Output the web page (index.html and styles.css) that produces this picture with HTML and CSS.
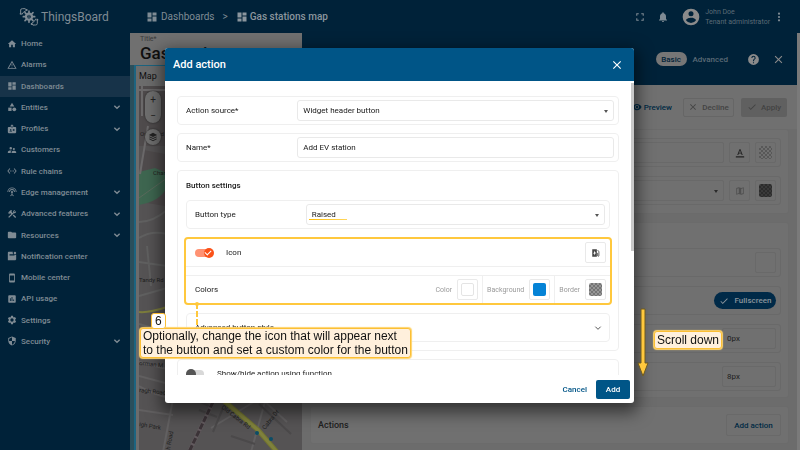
FILE: index.html
```html
<!DOCTYPE html>
<html lang="en">
<head>
    <meta charset="UTF-8">
    <meta name="viewport" content="width=device-width, initial-scale=1.0">
    <title>ThingsBoard</title>
    <link rel="stylesheet" href="styles.css">
</head>
<body>
    <svg class="sprite" aria-hidden="true">
        <symbol id="i-home" viewBox="0 0 24 24"><path d="M10 20v-6h4v6h5v-8h3L12 3 2 12h3v8z"/></symbol>
        <symbol id="i-alarm" viewBox="0 0 24 24"><path d="M12 5.99 19.53 19H4.47L12 5.99M12 2 1 21h22L12 2zm1 14h-2v2h2v-2zm0-6h-2v4h2v-4z"/></symbol>
        <symbol id="i-dashboard" viewBox="0 0 24 24"><path d="M3 13h8V3H3v10zm0 8h8v-6H3v6zm10 0h8V11h-8v10zm0-18v6h8V3h-8z"/></symbol>
        <symbol id="i-entities" viewBox="0 0 24 24"><path d="m12 2-5.500 9h11z"/><circle cx="17.500" cy="17.500" r="4.500"/><path d="M3 13.500h8v8H3z"/></symbol>
        <symbol id="i-profiles" viewBox="0 0 24 24"><path fill-rule="evenodd" d="M20 7h-5V4c0-1.100-.9-2-2-2h-2c-1.100 0-2 .9-2 2v3H4c-1.100 0-2 .9-2 2v11c0 1.100.9 2 2 2h16c1.100 0 2-.9 2-2V9c0-1.100-.9-2-2-2zM11 4h2v5h-2V4zM9 12a1.500 1.500 0 1 1 0 3 1.500 1.500 0 0 1 0-3zm3 6H6v-.8c0-1 2-1.600 3-1.600s3 .6 3 1.600v.8zm6-1.500h-4V15h4v1.500zm0-3h-4V12h4v1.500z"/></symbol>
        <symbol id="i-customers" viewBox="0 0 24 24"><path d="M16.500 12a2.500 2.500 0 1 0 0-5 2.500 2.500 0 0 0 0 5zM9 11a3 3 0 1 0 0-6 3 3 0 0 0 0 6zm7.500 3c-1.830 0-5.500.92-5.500 2.750V19h11v-2.250c0-1.830-3.670-2.750-5.500-2.750zM9 13c-2.330 0-7 1.170-7 3.500V19h7v-2.250c0-.85.33-2.340 2.370-3.470C10.500 13.100 9.660 13 9 13z"/></symbol>
        <symbol id="i-rules" viewBox="0 0 24 24"><path d="M7.770 6.760 6.230 5.480.82 12l5.410 6.520 1.540-1.280L3.420 12l4.350-5.240zM7 13h2v-2H7v2zm10-2h-2v2h2v-2zm-6 2h2v-2h-2v2zm6.770-7.520-1.540 1.280L20.580 12l-4.350 5.240 1.540 1.280L23.180 12l-5.410-6.520z"/></symbol>
        <symbol id="i-edge" viewBox="0 0 24 24"><path d="M12 5a7 7 0 0 0-7 7h2a5 5 0 0 1 10 0h2a7 7 0 0 0-7-7zm1 9.290A2.490 2.490 0 0 0 12 9.500a2.490 2.490 0 0 0-1 4.790v3.300L7.590 21 9 22.410l3-3 3 3L16.410 21 13 17.590v-3.300zM12 1A11 11 0 0 0 1 12h2a9 9 0 0 1 18 0h2A11 11 0 0 0 12 1z"/></symbol>
        <symbol id="i-tools" viewBox="0 0 24 24"><path d="m13.780 15.300 6 6 2.110-2.160-6-6zM17.500 10.100c-.39 0-.81-.05-1.140-.19L4.970 21.250l-2.110-2.110L10.270 11.740 8.500 9.960l-.72.7-1.450-1.410v2.860l-.7.7-3.520-3.560.7-.7h2.810l-1.400-1.410 3.560-3.560a3 3 0 0 1 4.220 0L10.620 5.660l1.410 1.410-.71.710 1.790 1.780 1.830-1.870c-.14-.33-.2-.75-.2-1.130a3.490 3.490 0 0 1 5.110-3.100l-2.700 2.700 1.490 1.500 2.710-2.700c.25.49.4 1.020.4 1.640 0 1.910-1.560 3.500-3.450 3.500z"/></symbol>
        <symbol id="i-folder" viewBox="0 0 24 24"><path d="M10 4H4c-1.100 0-2 .9-2 2v12c0 1.100.9 2 2 2h16c1.100 0 2-.9 2-2V8c0-1.100-.9-2-2-2h-8l-2-2z"/></symbol>
        <symbol id="i-notify" viewBox="0 0 24 24"><path d="M18 8.500V11H6v2h12v0H6v-5h9.500A5 5 0 0 1 14.200 2H4C2.900 2 2 3 2 4v18h18c1 0 2-1 2-2V9a5 5 0 0 1-4-.5z"/><circle cx="19" cy="4.500" r="3"/></symbol>
        <symbol id="i-mobile" viewBox="0 0 24 24"><path d="M17 1H7c-1.100 0-2 .9-2 2v18c0 1.100.9 2 2 2h10c1.100 0 2-.9 2-2V3c0-1.100-.9-2-2-2zm0 17H7V6h10v12z"/></symbol>
        <symbol id="i-chart" viewBox="0 0 24 24"><path d="M19 3H5c-1.100 0-2 .9-2 2v14c0 1.100.9 2 2 2h14c1.100 0 2-.9 2-2V5c0-1.100-.9-2-2-2zM9 17H7v-7h2v7zm4 0h-2V7h2v10zm4 0h-2v-4h2v4z"/></symbol>
        <symbol id="i-gear" viewBox="0 0 24 24"><path d="M19.430 12.980c.04-.32.07-.64.07-.98s-.03-.66-.07-.98l2.110-1.650a.5.5 0 0 0 .12-.64l-2-3.460a.5.5 0 0 0-.61-.22l-2.490 1a7.300 7.300 0 0 0-1.690-.98l-.38-2.650A.49.49 0 0 0 14 2h-4a.49.49 0 0 0-.49.42l-.38 2.650c-.61.25-1.170.59-1.690.98l-2.490-1a.49.49 0 0 0-.61.22l-2 3.460a.49.49 0 0 0 .12.64l2.110 1.650a7.900 7.900 0 0 0 0 1.960l-2.110 1.650a.5.5 0 0 0-.12.640l2 3.460c.12.22.39.3.61.22l2.490-1c.52.4 1.080.73 1.690.98l.38 2.650c.03.240.24.42.49.42h4c.25 0 .46-.18.49-.42l.38-2.650c.61-.25 1.170-.59 1.690-.98l2.490 1c.23.09.49 0 .61-.22l2-3.460a.5.500 0 0 0-.12-.64l-2.110-1.650zM12 16a4 4 0 1 1 0-8 4 4 0 0 1 0 8z"/></symbol>
        <symbol id="i-shield" viewBox="0 0 24 24"><path d="M12 1 3 5v6c0 5.550 3.840 10.740 9 12 5.160-1.260 9-6.450 9-12V5l-9-4zm0 10.990h7c-.53 4.120-3.280 7.790-7 8.940V12H5V6.300l7-3.110v8.800z"/></symbol>
        <symbol id="i-down" viewBox="0 0 24 24"><path d="M4 8l8 8 8-8" fill="none" stroke="currentColor" stroke-width="4"/></symbol>
        <symbol id="i-down-thin" viewBox="0 0 24 24"><path d="M4 8l8 8 8-8" fill="none" stroke="currentColor" stroke-width="3"/></symbol>
        <symbol id="i-expand" viewBox="0 0 24 24"><path d="M3 9V3h6v2.500H5.500V9zM15 3h6v6h-2.500V5.500H15zM3 15h2.500v3.500H9V21H3zM18.500 15H21v6h-6v-2.500h3.500z"/></symbol>
        <symbol id="i-bell" viewBox="0 0 24 24"><path d="M12 22c1.100 0 2-.9 2-2h-4c0 1.100.9 2 2 2zm6-6v-5c0-3.070-1.640-5.640-4.500-6.320V4a1.500 1.500 0 0 0-3 0v.68C7.630 5.360 6 7.920 6 11v5l-2 2v1h16v-1l-2-2z"/></symbol>
        <symbol id="i-account" viewBox="0 0 24 24"><path d="M12 2a10 10 0 1 0 0 20 10 10 0 0 0 0-20zm0 3a3 3 0 1 1 0 6 3 3 0 0 1 0-6zm0 14.200a7.200 7.200 0 0 1-6-3.220c.03-1.990 4-3.080 6-3.080s5.970 1.090 6 3.080a7.200 7.200 0 0 1-6 3.220z"/></symbol>
        <symbol id="i-more" viewBox="0 0 24 24"><circle cx="12" cy="4" r="2.600"/><circle cx="12" cy="12" r="2.600"/><circle cx="12" cy="20" r="2.600"/></symbol>
        <symbol id="i-close" viewBox="0 0 24 24"><path d="M19 6.410 17.590 5 12 10.590 6.410 5 5 6.410 10.590 12 5 17.590 6.410 19 12 13.410 17.590 19 19 17.590 13.410 12z"/></symbol>
        <symbol id="i-help" viewBox="0 0 24 24"><path d="M12 2a10 10 0 1 0 0 20 10 10 0 0 0 0-20zm1 17h-2v-2h2v2zm2.070-7.750-.9.920C13.450 12.900 13 13.500 13 15h-2v-.5c0-1.100.45-2.100 1.170-2.830l1.240-1.260c.37-.36.59-.86.59-1.410a2 2 0 0 0-4 0H8a4 4 0 0 1 8 0c0 .88-.36 1.680-.93 2.250z"/></symbol>
        <symbol id="i-eye" viewBox="0 0 24 24"><path d="M12 4.500C7 4.500 2.730 7.610 1 12c1.730 4.390 6 7.500 11 7.500s9.270-3.110 11-7.500c-1.730-4.390-6-7.500-11-7.500zM12 17a5 5 0 1 1 0-10 5 5 0 0 1 0 10zm0-8a3 3 0 1 0 0 6 3 3 0 0 0 0-6z"/></symbol>
        <symbol id="i-check" viewBox="0 0 24 24"><path d="M9 16.170 4.830 12l-1.420 1.410L9 19 21 7l-1.410-1.410z"/></symbol>
        <symbol id="i-textcolor" viewBox="0 0 24 24"><path d="M2 20h20v3H2zM5.490 17h2.420l1.270-3.580h5.650L16.090 17h2.420L13.250 3h-2.500L5.490 17zm4.420-5.610 2.030-5.790h.12l2.030 5.790H9.910z"/></symbol>
        <symbol id="i-map" viewBox="0 0 24 24"><path d="M15 5 9 3 3 5v16l6-2 6 2 6-2V3zm-6 12-4 1.500V6.500L9 5.200zm10 .5-4 1.200V7l4-1.500z"/></symbol>
        <symbol id="i-layers" viewBox="0 0 24 24"><path d="m12 2 10 5-10 5L2 7zM4.500 10.800 12 14.500l7.500-3.700L22 12l-10 5-10-5zM4.500 15.800l7.500 3.700 7.500-3.700L22 17l-10 5-10-5z"/></symbol>
        <symbol id="i-ev" viewBox="0 0 24 24"><path fill-rule="evenodd" d="M14 3H3v18h11zM8 18v-4.500H5.500L9.500 6v5H12l-4 7z"/><path d="M14 13h2v6q2 2 3 0V9l-3-4" fill="none" stroke="currentColor" stroke-width="2"/></symbol>
        <symbol id="i-logo" viewBox="0 0 60 60">
            <g fill="none" stroke="currentColor" stroke-width="3" stroke-linecap="round">
                <path d="M5 17V9q0-4 5-4h6M9 22l4-6 8-5M17 5l6 3M55 40v9q0 5-5 5h-7M50 36l-4 7-8 6M42 54l-5-4"/>
                <circle cx="30" cy="29" r="9" stroke-width="7"/>
                <path d="M30 12v6M30 40v6M13 29h6M41 29h6M18 17l4 4M42 17l-4 4M18 41l4-4M42 41l-4-4" stroke-width="5"/>
                <path d="M25 34l9-10M24 22l4 4M32 32l4 4" stroke-width="2"/>
            </g>
            <g fill="currentColor"><circle cx="5" cy="20" r="3"/><circle cx="23" cy="9" r="3"/><circle cx="55" cy="38" r="3"/><circle cx="38" cy="51" r="3"/></g>
        </symbol>
    </svg>

    <div class="app">
        <header class="topbar">
            <a class="logo" href="#"><svg class="logo-icon"><use href="#i-logo"/></svg>ThingsBoard</a>
            <nav class="crumbs">
                <a href="#"><svg class="icon"><use href="#i-dashboard"/></svg>Dashboards</a>
                <span>&gt;</span>
                <a class="current" href="#"><svg class="icon"><use href="#i-dashboard"/></svg>Gas stations map</a>
            </nav>
            <div class="user-tools">
                <button class="icon-btn" aria-label="Fullscreen"><svg class="icon"><use href="#i-expand"/></svg></button>
                <button class="icon-btn" aria-label="Notifications"><svg class="icon bell"><use href="#i-bell"/></svg></button>
                <div class="user">
                    <svg class="avatar"><use href="#i-account"/></svg>
                    <div class="user-text"><span>John Doe</span><span>Tenant administrator</span></div>
                </div>
                <button class="icon-btn" aria-label="More"><svg class="icon"><use href="#i-more"/></svg></button>
            </div>
        </header>

        <div class="workspace">
            <nav class="sidebar">
                <a href="#"><svg class="icon"><use href="#i-home"/></svg>Home</a>
                <a href="#"><svg class="icon"><use href="#i-alarm"/></svg>Alarms</a>
                <a class="active" href="#"><svg class="icon"><use href="#i-dashboard"/></svg>Dashboards</a>
                <a href="#"><svg class="icon"><use href="#i-entities"/></svg>Entities<svg class="chevron"><use href="#i-down"/></svg></a>
                <a href="#"><svg class="icon"><use href="#i-profiles"/></svg>Profiles<svg class="chevron"><use href="#i-down"/></svg></a>
                <a href="#"><svg class="icon"><use href="#i-customers"/></svg>Customers</a>
                <a href="#"><svg class="icon"><use href="#i-rules"/></svg>Rule chains</a>
                <a href="#"><svg class="icon"><use href="#i-edge"/></svg>Edge management<svg class="chevron"><use href="#i-down"/></svg></a>
                <a href="#"><svg class="icon"><use href="#i-tools"/></svg>Advanced features<svg class="chevron"><use href="#i-down"/></svg></a>
                <a href="#"><svg class="icon"><use href="#i-folder"/></svg>Resources<svg class="chevron"><use href="#i-down"/></svg></a>
                <a href="#"><svg class="icon"><use href="#i-notify"/></svg>Notification center</a>
                <a href="#"><svg class="icon"><use href="#i-mobile"/></svg>Mobile center</a>
                <a href="#"><svg class="icon"><use href="#i-chart"/></svg>API usage</a>
                <a href="#"><svg class="icon"><use href="#i-gear"/></svg>Settings</a>
                <a href="#"><svg class="icon"><use href="#i-shield"/></svg>Security<svg class="chevron"><use href="#i-down"/></svg></a>
            </nav>

            <section class="dashboard">
                <div class="dashboard-title">
                    <small>Title*</small>
                    <h1>Gas stations map</h1>
                </div>
                <div class="widget-frame">
                    <div class="widget">
                        <h2>Map</h2>
                        <div class="map">
                            <svg class="map-drawing" viewBox="0 0 163 366" preserveAspectRatio="xMinYMin slice">
                                <rect width="163" height="366" fill="#555354"/>
                                <path d="M0 0h30v60H0zM4 64l22 4v52L2 116z" fill="#4f4b4c"/>
                                <path d="M0 119V86l16-4 12 5v14q-6 14-28 18z" fill="#3e6650"/>
                                <path d="M0 112L28 92" stroke="#59695b" stroke-width="1" fill="none"/>
                                <path d="M9 40L1 88M0 4h28M3 0v30" stroke="#6b696a" stroke-width="2" fill="none"/>
                                <path d="M0 136q14 0 28-12M0 152q12-8 28-4M0 176l28 4M0 210l28-8M8 160l4 40M0 262l28 10M0 238l28 8" stroke="#606060" stroke-width="2" fill="none"/>
                                <path d="M0 226q10 1 28-5" stroke="#7c7d3c" stroke-width="2" fill="none"/>
                                <path d="M0 276l36 9M44 260l-20 106M0 290l30 8M0 300q14 8 30 12M0 324l34 5M72 320l-22 46M112 366l20-72M72 342l46-28 26-24M118 340l20 26M98 290l50 46M132 292l31 24" stroke="#626061" stroke-width="2" fill="none"/>
                                <path d="M36 304l34 16M60 324l18 7M84 322l-10 24M92 350l24 8M120 318l32 30" stroke="#4b494a" stroke-width="2" fill="none"/>
                                <path d="M74 316L50 366" stroke="#625a5e" stroke-width="4" fill="none"/>
                                <path d="M74 316L50 366" stroke="#3b3337" stroke-width="3" stroke-dasharray="6 2" fill="none"/>
                                <path d="M66 300L84 314 119 344 138 366" stroke="#73752f" stroke-width="5" fill="none"/>
                                <path d="M66 300L84 314 119 344 138 366" stroke="#7f813d" stroke-width="3" fill="none"/>
                                <circle cx="118" cy="347" r="2" fill="#0b4d67"/><circle cx="132" cy="353" r="2" fill="#0b4d67"/>
                                <g class="map-text">
                                    <text x="1" y="50">Ow Road</text>
                                    <text x="14" y="89">Char</text>
                                    <text x="0" y="196">Tandy Rd</text>
                                    <text x="0" y="279" transform="rotate(6 0 279)">orman M</text>
                                    <text x="0" y="306" transform="rotate(6 0 306)">ragh Road</text>
                                    <text x="0" y="340" transform="rotate(10 0 340)">igh Park</text>
                                    <text x="31" y="364" transform="rotate(-80 31 364)">h Road</text>
                                    <text x="82" y="322" transform="rotate(38 82 322)">Old Cabra Rd</text>
                                    <text x="126" y="344" transform="rotate(-52 126 344)">Cabra Dr</text>
                                </g>
                            </svg>
                            <div class="map-controls">
                                <div class="zoom"><button aria-label="Zoom in">+</button><button aria-label="Zoom out">−</button></div>
                                <button class="layers" aria-label="Layers"><svg class="icon"><use href="#i-layers"/></svg></button>
                            </div>
                        </div>
                    </div>
                </div>
            </section>

            <section class="panel">
                <header class="panel-header">
                    <h2>Map</h2>
                    <div class="mode"><button class="selected">Basic</button><button>Advanced</button></div>
                    <button class="icon-btn" aria-label="Help"><svg class="icon help"><use href="#i-help"/></svg></button>
                    <button class="icon-btn" aria-label="Close panel"><svg class="icon help"><use href="#i-close"/></svg></button>
                </header>
                <div class="panel-toolbar">
                    <button class="preview"><svg class="icon"><use href="#i-eye"/></svg>Preview</button>
                    <button class="decline"><svg class="icon"><use href="#i-close"/></svg>Decline</button>
                    <button class="apply"><svg class="icon"><use href="#i-check"/></svg>Apply</button>
                </div>
                <div class="panel-section">
                    <div class="panel-row">
                        <input class="panel-field" type="text" aria-label="Title">
                        <button class="square" aria-label="Font"><svg class="icon"><use href="#i-textcolor"/></svg></button>
                        <button class="square" aria-label="Font color"><span class="swatch checker"></span></button>
                    </div>
                    <div class="panel-row">
                        <div class="select-wrap"><select class="panel-field" aria-label="Icon size"><option></option></select></div>
                        <button class="square muted" aria-label="Icon"><svg class="icon"><use href="#i-map"/></svg></button>
                        <button class="square" aria-label="Icon color"><span class="swatch checker dark"></span></button>
                    </div>
                </div>
                <div class="panel-section tall">
                    <div class="panel-row"><button class="square" aria-label="Background"></button></div>
                    <div class="panel-row"><button class="pill"><svg class="icon"><use href="#i-check"/></svg>Fullscreen</button></div>
                    <div class="panel-row"><input class="panel-field short" type="text" value="0px" aria-label="Padding"></div>
                    <div class="panel-row"><input class="panel-field short" type="text" value="8px" aria-label="Border radius"></div>
                </div>
                <div class="panel-section actions">
                    <h3>Actions</h3>
                    <button class="add-action">Add action</button>
                </div>
            </section>
        </div>
    </div>

    <div class="dialog" role="dialog" aria-labelledby="dialogTitle">
        <header class="dialog-header">
            <h2 id="dialogTitle">Add action</h2>
            <button class="icon-btn" aria-label="Close"><svg class="icon"><use href="#i-close"/></svg></button>
        </header>
        <div class="dialog-body">
            <div class="card row">
                <label for="source">Action source*</label>
                <div class="select-wrap field-wrap">
                    <select class="field" id="source"><option>Widget header button</option></select>
                </div>
            </div>
            <div class="card row">
                <label for="name">Name*</label>
                <div class="field-wrap"><input class="field" id="name" type="text" value="Add EV station"></div>
            </div>
            <div class="card settings">
                <h3>Button settings</h3>
                <div class="card row">
                    <label for="type">Button type</label>
                    <div class="select-wrap field-wrap marked">
                        <select class="field" id="type"><option>Raised</option></select>
                    </div>
                </div>
                <div class="highlight">
                    <div class="row icon-row">
                        <input class="toggle" type="checkbox" id="iconToggle" checked>
                        <label for="iconToggle">Icon</label>
                        <button class="square" aria-label="Choose icon"><svg class="icon"><use href="#i-ev"/></svg></button>
                    </div>
                    <div class="row colors">
                        <span class="row-title">Colors</span>
                        <div class="color">Color<button class="square" aria-label="Color"><span class="swatch"></span></button></div>
                        <div class="color">Background<button class="square" aria-label="Background color"><span class="swatch blue"></span></button></div>
                        <div class="color">Border<button class="square" aria-label="Border color"><span class="swatch checker"></span></button></div>
                    </div>
                    <span class="connector"></span>
                </div>
                <div class="card row advanced">
                    <span class="row-title">Advanced button style</span>
                    <svg class="chevron"><use href="#i-down-thin"/></svg>
                </div>
            </div>
            <div class="card row function-row">
                <input class="toggle" type="checkbox" id="fnToggle">
                <label for="fnToggle">Show/hide action using function</label>
            </div>
        </div>
        <span class="scrollbar"></span>
        <footer class="dialog-footer">
            <button class="cancel">Cancel</button>
            <button class="add">Add</button>
        </footer>
    </div>

    <div class="callout step">
        <span class="number">6</span>
        Optionally, change the icon that will appear next<br>to the button and set a custom color for the button
    </div>
    <svg class="arrow" viewBox="0 0 12 70"><path d="M4 1h4v54h3L6 68 1 55h3z"/></svg>
    <div class="callout scroll-note">Scroll down</div>
</body>
</html>
```
FILE: styles.css
```css
* {
    box-sizing: border-box;
}

body {
    margin: 0;
    font-family: Roboto, sans-serif;
    font-size: 8px;
    color: #202020;
    background-color: #707070;
}

h1, h2, h3 {
    margin: 0;
    font-weight: 500;
}

a {
    color: inherit;
    text-decoration: none;
}

button, input, select {
    font: inherit;
    color: inherit;
    margin: 0;
    padding: 0;
    border: none;
    background: none;
}

select {
    appearance: none;
}

button {
    display: flex;
    align-items: center;
    justify-content: center;
}

svg {
    fill: currentColor;
    flex-shrink: 0;
}

.sprite {
    display: none;
}

.icon {
    width: 10px;
    height: 10px;
}

.chevron {
    width: 8px;
    height: 8px;
    margin-left: auto;
}

.app {
    display: flex;
    flex-direction: column;
    height: 100vh;
    overflow: hidden;
}

/* top bar */
.topbar {
    display: flex;
    align-items: center;
    height: 33px;
    flex-shrink: 0;
    padding-right: 16px;
    background-color: #002239;
    color: #7f8b94;
}

.logo {
    display: flex;
    align-items: center;
    gap: 2px;
    width: 146px;
    padding-left: 19px;
    font-size: 12px;
}

.logo-icon {
    width: 20px;
    height: 20px;
}

.crumbs {
    display: flex;
    align-items: center;
    gap: 8px;
    font-size: 10px;
}

.crumbs a {
    display: flex;
    align-items: center;
    gap: 3px;
}

.crumbs .icon {
    width: 12px;
    height: 12px;
}

.crumbs .current {
    gap: 2px;
    font-weight: 500;
    color: #8b969e;
}

.user-tools {
    display: flex;
    align-items: center;
    gap: 12px;
    margin-left: auto;
}

.user {
    display: flex;
    align-items: center;
    gap: 4px;
    margin-right: -8px;
    font-size: 7px;
    line-height: 10px;
}

.user-text {
    display: flex;
    flex-direction: column;
}

.user-text span {
    color: #5b6a76;
}

.bell {
    width: 12px;
    height: 12px;
}

.avatar {
    width: 20px;
    height: 20px;
    color: #8b8b8b;
}

.workspace {
    display: flex;
    flex: 1;
    min-height: 0;
}

/* menu */
.sidebar {
    display: grid;
    grid-auto-rows: 1fr;
    align-content: start;
    width: 130px;
    height: 100%;
    max-height: 417px;
    flex-shrink: 0;
    padding-bottom: 98px;
    background-color: #002239;
    color: #7f8b94;
    font-weight: 500;
}

.sidebar a {
    display: flex;
    align-items: center;
    gap: 4px;
    padding: 0 9px 0 7px;
}

.sidebar .active {
    background-color: #173349;
}

/* dashboard */
.dashboard {
    display: flex;
    flex-direction: column;
    width: 172px;
    flex-shrink: 0;
    background-color: #707070;
}

.dashboard-title {
    height: 32px;
    padding: 2px 10px 0;
    color: #101010;
    white-space: nowrap;
}

.dashboard-title small {
    display: block;
    font-size: 7px;
    line-height: 8px;
    color: #3a3a3a;
}

.dashboard-title h1 {
    font-size: 17px;
    line-height: 20px;
}

.widget-frame {
    flex: 1;
    display: flex;
    padding-left: 4px;
    background-color: #2a4f5c;
}

.widget {
    display: flex;
    flex-direction: column;
    flex: 1;
    padding-left: 3px;
    border: solid #1c6480;
    border-width: 1px 0 0 2px;
    background-color: #6c6c6c;
}

.widget h2 {
    height: 20px;
    font-size: 9px;
    line-height: 20px;
    font-weight: 400;
    color: #101010;
}

.map {
    position: relative;
    flex: 1;
    overflow: hidden;
    background-color: #555354;
}

.map-drawing {
    position: absolute;
    inset: 0;
    width: 100%;
    height: 100%;
}

.map-text {
    font-size: 6px;
    fill: #1f1f1f;
}

.map-controls {
    position: absolute;
    top: 5px;
    left: 6px;
    display: flex;
    flex-direction: column;
    gap: 6px;
    color: #222;
}

.zoom {
    width: 16px;
    height: 32px;
    border-radius: 8px;
    background-color: #6e6e6e;
    box-shadow: 0 0 2px #222;
}

.zoom button {
    width: 16px;
    height: 16px;
    font-size: 10px;
}

.layers {
    width: 16px;
    height: 16px;
    border-radius: 8px;
    background-color: #6e6e6e;
    box-shadow: 0 0 2px #222;
}

/* widget settings panel */
.panel {
    display: flex;
    flex-direction: column;
    flex: 1;
    min-width: 0;
    background-color: #6c6c6c;
    border-right: 3px solid #7a7a7a;
}

.panel-header {
    display: flex;
    align-items: center;
    gap: 12px;
    height: 52px;
    flex-shrink: 0;
    padding: 0 12px 0 13px;
    background-color: #002239;
    color: #8b8b8b;
}

.panel-header h2 {
    margin-right: auto;
    font-size: 13px;
}

.help {
    width: 13px;
    height: 13px;
}

.mode {
    display: flex;
    gap: 6px;
    margin-right: 7px;
    font-weight: 500;
    color: #5b6a76;
}

.mode .selected {
    width: 31px;
    height: 14px;
    border-radius: 7px;
    background-color: #767676;
    color: #002239;
}

.panel-toolbar {
    display: flex;
    justify-content: flex-end;
    align-items: center;
    gap: 7px;
    height: 44px;
    flex-shrink: 0;
    padding: 0 10px;
    background-color: #707070;
    font-weight: 500;
    color: #434343;
}

.panel-toolbar button {
    gap: 4px;
    height: 19px;
    border-radius: 2px;
}

.panel-toolbar .preview {
    gap: 2px;
    margin-right: 4px;
    color: #002a44;
}

.panel-toolbar .decline {
    width: 51px;
    border: 1px solid #666;
}

.panel-toolbar .apply {
    width: 46px;
    background-color: #606060;
}

.panel-section {
    display: flex;
    flex-direction: column;
    flex-shrink: 0;
    gap: 9px;
    margin: 0 8px 8px;
    padding: 8px 7px 8px;
    border: 1px solid #6b6b6b;
    border-radius: 3px;
    background-color: #707070;
}

.panel-section.tall {
    padding-top: 25px;
    padding-bottom: 6px;
}

.panel-row {
    display: flex;
    align-items: center;
    justify-content: flex-end;
    gap: 5px;
    height: 29px;
    padding: 0 4px;
    border: 1px solid #696969;
    border-radius: 3px;
}

.panel-field {
    flex: 1;
    width: 100%;
    height: 21px;
    padding: 0 4px;
    border: 1px solid #696969;
    border-radius: 2px;
}

.panel-field.short {
    flex: none;
    width: 54px;
}

.panel-row .select-wrap {
    flex: 1;
}

.square {
    width: 21px;
    height: 21px;
    flex-shrink: 0;
    border: 1px solid #696969;
    border-radius: 2px;
}

.muted {
    color: #505050;
}

.swatch {
    width: 13px;
    height: 13px;
    border: 1px solid #e4e4e4;
    border-radius: 2px;
}

.swatch.checker {
    border: none;
    background: repeating-conic-gradient(#747474 0 25%, #969696 0 50%) 0 0 / 4px 4px;
}

.panel .swatch.checker {
    background: repeating-conic-gradient(#585858 0 25%, #707070 0 50%) 0 0 / 4px 4px;
}

.panel .swatch.dark {
    background: repeating-conic-gradient(#2c2c2c 0 25%, #3a3a3a 0 50%) 0 0 / 4px 4px;
}

.swatch.blue {
    border: none;
    background-color: #0583d6;
}

.pill {
    gap: 6px;
    width: 62px;
    height: 17px;
    border-radius: 9px;
    background-color: #002a48;
    color: #8b959c;
    font-weight: 500;
}

.panel-section.actions {
    flex-direction: row;
    align-items: center;
    justify-content: space-between;
    height: 38px;
}

.actions h3 {
    font-size: 9px;
}

.add-action {
    width: 55px;
    height: 22px;
    border: 1px solid #696969;
    border-radius: 2px;
    color: #002a44;
    font-weight: 500;
}

/* dialog */
.dialog {
    position: fixed;
    inset: 48px 166px 47px 165px;
    display: flex;
    flex-direction: column;
    overflow: hidden;
    border-radius: 3px;
    background-color: #fff;
    box-shadow: 0 6px 16px 4px rgba(0, 0, 0, 0.5);
}

.dialog-header {
    display: flex;
    align-items: center;
    justify-content: space-between;
    height: 33px;
    flex-shrink: 0;
    padding: 0 10px 0 8px;
    background-color: #005587;
    color: #fff;
}

.dialog-header h2 {
    font-size: 11px;
}

.dialog-header .icon {
    width: 14px;
    height: 14px;
}

.dialog-body {
    display: flex;
    flex-direction: column;
    gap: 8px;
    flex: 1;
    min-height: 0;
    overflow: hidden;
    padding: 15px 15px 0 12px;
}

.card {
    flex-shrink: 0;
    border: 1px solid #efefef;
    border-radius: 4px;
}

.row {
    display: flex;
    align-items: center;
    height: 29px;
    padding: 0 4px 0 8px;
}

.row label {
    flex: 1;
}

.dialog .square,
.field {
    border: 1px solid #e9e9e9;
}

.dialog .square {
    color: #444;
}

.field-wrap {
    flex: 0 0 74%;
}

.settings .field-wrap {
    flex-basis: 73%;
}

.field {
    width: 100%;
    height: 21px;
    padding: 0 5px;
    border-radius: 3px;
    display: block;
}

.select-wrap {
    position: relative;
}

.select-wrap::after {
    content: "";
    position: absolute;
    right: 6px;
    top: 10px;
    border: 2px solid transparent;
    border-top: 3px solid #555;
    border-bottom: none;
}

.panel .select-wrap::after {
    border-top-color: #2a2a2a;
}

.marked::before {
    content: "";
    position: absolute;
    left: 3px;
    top: 15px;
    width: 38px;
    height: 1px;
    background: linear-gradient(90deg, #ffbe0a, #ffd65c);
}

.settings {
    display: flex;
    flex-direction: column;
    gap: 8px;
    padding: 0 8px 8px;
}

.settings h3 {
    height: 21px;
    font-size: 8px;
    line-height: 30px;
}

.highlight {
    position: relative;
    display: flex;
    flex-direction: column;
    gap: 8px;
    margin: 0 -2px;
    border: 2px solid #ffc83d;
    border-radius: 4px;
}

.highlight .row {
    height: 28px;
    padding-left: 9px;
}

.icon-row {
    border-bottom: 1px solid #efefef;
}

.colors {
    border-top: 1px solid #efefef;
}

.row-title {
    margin-right: auto;
}

.color {
    display: flex;
    align-items: center;
    gap: 5px;
    height: 100%;
    padding: 0 4px;
    border-right: 1px solid #efefef;
    font-size: 7px;
    color: #9a9a9a;
}

.color:last-child {
    border: none;
    padding-right: 0;
}

.toggle {
    appearance: none;
    position: relative;
    width: 18px;
    height: 8px;
    margin-right: 13px;
    border-radius: 4px;
    background-color: #d8d8d8;
}

.toggle::after {
    content: "";
    position: absolute;
    left: 0;
    top: -1px;
    width: 10px;
    height: 10px;
    border-radius: 5px;
    background-color: #555;
}

.toggle:checked {
    background-color: #ff9273;
}

.toggle:checked::after {
    left: auto;
    right: -1px;
    background-color: #fb5219;
}

.toggle:checked::before {
    content: "";
    position: absolute;
    z-index: 1;
    right: 2px;
    top: 1px;
    width: 5px;
    height: 3px;
    border: solid #fff;
    border-width: 0 0 1px 1px;
    transform: rotate(-45deg);
}

.connector {
    position: absolute;
    left: 10px;
    top: 100%;
    height: 22px;
    border-left: 2px dashed #ffc83d;
}

.connector::before {
    content: "";
    position: absolute;
    left: -3px;
    top: -1px;
    width: 4px;
    height: 4px;
    border-radius: 2px;
    background-color: #ffc83d;
}

.dialog .advanced .chevron {
    margin-right: 3px;
    color: #555;
}

.scrollbar {
    position: absolute;
    top: 35px;
    right: 0;
    width: 3px;
    height: 168px;
    background-color: #c9c9c9;
}

.dialog-footer {
    display: flex;
    align-items: center;
    justify-content: flex-end;
    gap: 9px;
    height: 28px;
    flex-shrink: 0;
    padding: 0 4px;
    font-weight: 500;
    color: #005587;
}

.dialog-footer .add {
    width: 34px;
    height: 19px;
    border-radius: 2px;
    background-color: #005587;
    color: #fff;
}

/* tutorial marks */
.callout {
    position: fixed;
    border: 1px solid #fbbf35;
    border-radius: 3px;
    background-color: #fff0dc;
    box-shadow: 0 0 1px 1px #ffd36a;
    font-family: "Liberation Sans", sans-serif;
    font-size: 12px;
    line-height: 14px;
    color: #111;
    white-space: nowrap;
}

.step {
    left: 140px;
    top: 328px;
    padding: 0 2px;
}

.number {
    position: absolute;
    left: 10px;
    bottom: 100%;
    padding: 0 3px;
    border: 1px solid #fbbf35;
    border-radius: 3px;
    background-color: #fff;
}

.scroll-note {
    left: 654px;
    top: 331px;
    padding: 1px 2px;
}

.arrow {
    position: fixed;
    left: 637px;
    top: 308px;
    width: 12px;
    height: 70px;
    fill: #ffc83d;
    stroke: #6e5a20;
    stroke-width: 1px;
}
```
